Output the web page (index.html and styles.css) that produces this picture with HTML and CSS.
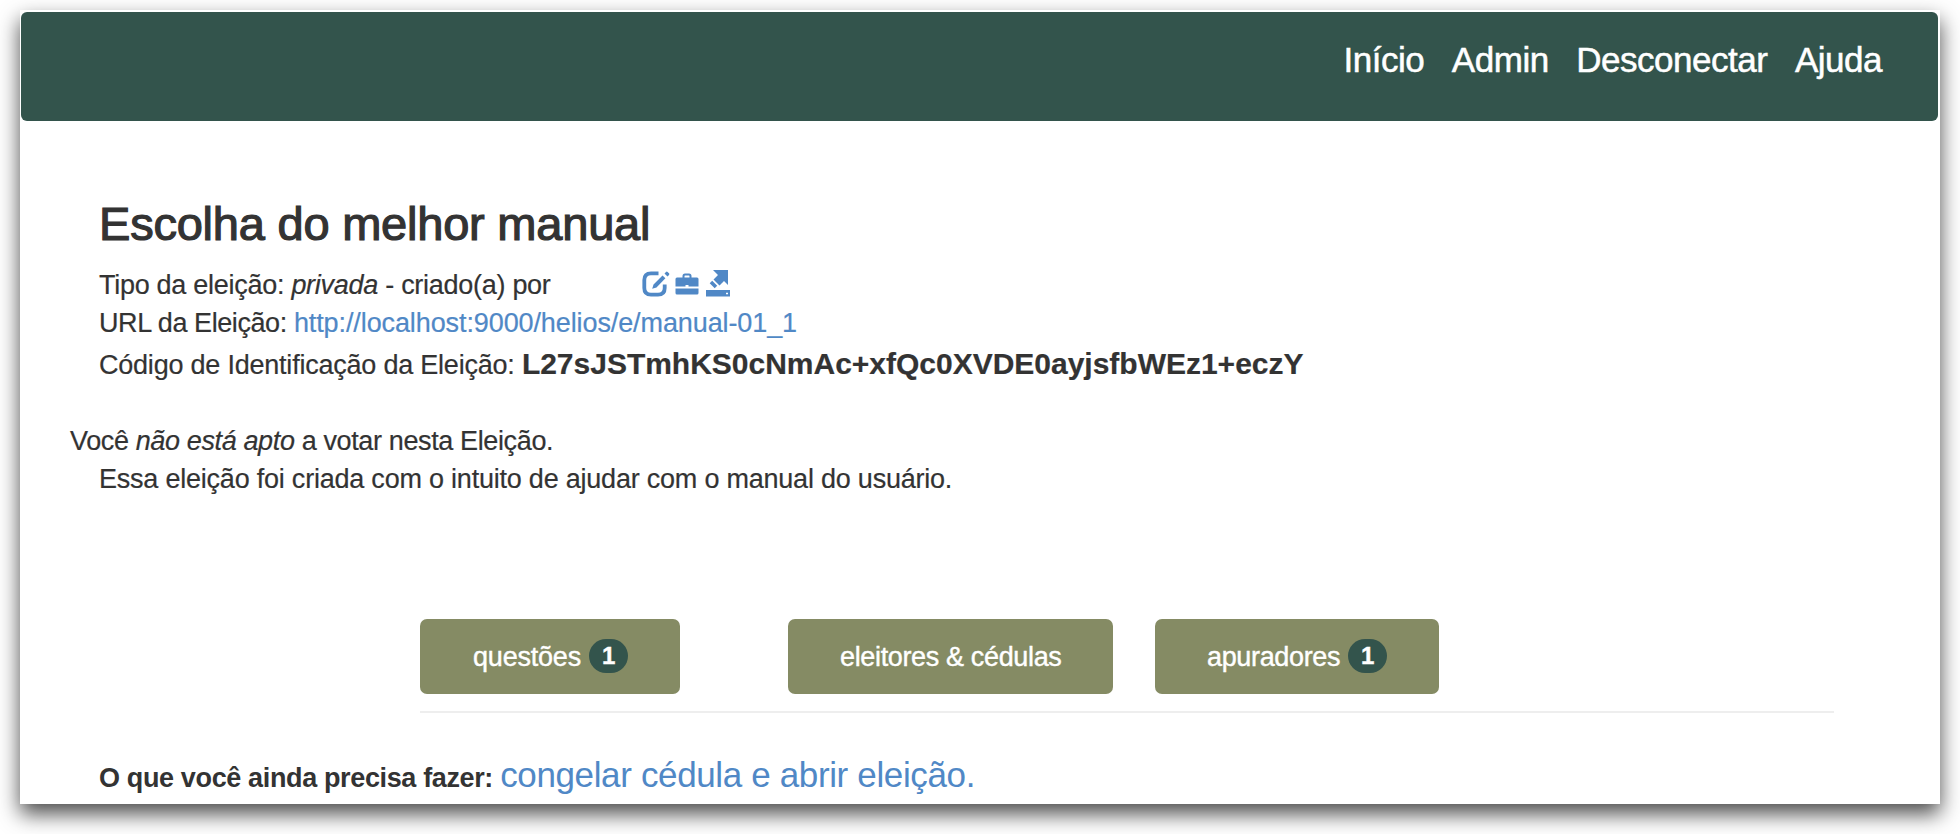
FILE: index.html
```html
<!DOCTYPE html>
<html lang="pt-BR">
<head>
<meta charset="utf-8">
<title>Escolha do melhor manual</title>
<link rel="stylesheet" href="styles.css">
</head>
<body>
<div class="window">
  <nav class="navbar">
    <a href="#">Início</a>
    <a href="#">Admin</a>
    <a href="#">Desconectar</a>
    <a href="#">Ajuda</a>
  </nav>
  <main class="content">
    <h2 class="title">Escolha do melhor manual</h2>
    <div class="line type-line">
      <span>Tipo da eleição: <em>privada</em> - criado(a) por</span>
      <span class="icons">
        <a href="#"><svg class="icon-edit" width="28" height="26" viewBox="0 0 28 26"><path d="M16.500 2.300H9Q2.300 2.300 2.300 9v8q0 6.700 6.700 6.700h7q6.700 0 6.700-6.700v-3.500" fill="none" stroke="currentColor" stroke-width="3.800"/><path d="M10.200 17.800l1.300-4.400L20.500 4.400l2.900 2.900L14.500 16.400zM22.500 2.400l1.500-1.500q.8-.8 1.600 0l1.400 1.400q.8.800 0 1.600l-1.500 1.500z" fill="currentColor"/></svg></a>
        <a href="#"><svg class="icon-case" width="24" height="22" viewBox="0 0 24 22"><path d="M8.500 5V3q0-1.500 1.500-1.500h4q1.500 0 1.500 1.500v2" fill="none" stroke="currentColor" stroke-width="2"/><path d="M2 4.500h20q1.500 0 1.500 1.500v7.500h-10v-1.500h-3v1.500H.5V6Q.5 4.500 2 4.500zM.5 15.500h23V20q0 1.500-1.500 1.500H2Q.5 21.500.5 20z" fill="currentColor"/></svg></a>
        <a href="#"><svg class="icon-save" width="26" height="27" viewBox="0 0 26 27"><path d="M8 0h15v15l-4-4-4.500 4.500-6-6L13 5zM7.200 10.800l5 5-2.500 2.500-5-5zM1 20h24v6.500H1z" fill="currentColor"/><path d="M21 22.700h2v1.500h-2z" fill="#fff"/></svg></a>
      </span>
    </div>
    <div class="line"><span class="url-label">URL da Eleição: </span><a href="#" class="url">http://localhost:9000/helios/e/manual-01_1</a></div>
    <div class="line code-line">Código de Identificação da Eleição: <strong class="code">L27sJSTmhKS0cNmAc+xfQc0XVDE0ayjsfbWEz1+eczY</strong></div>
    <div class="line notice">Você <em>não está apto</em> a votar nesta Eleição.</div>
    <div class="line">Essa eleição foi criada com o intuito de ajudar com o manual do usuário.</div>
    <div class="actions">
      <div class="cell cell-one"><a href="#" class="button button-one"><span class="label">questões</span><span class="badge">1</span></a></div>
      <div class="cell cell-two"><a href="#" class="button"><span class="label">eleitores &amp; cédulas</span></a></div>
      <div class="cell"><a href="#" class="button"><span class="label">apuradores</span><span class="badge">1</span></a></div>
    </div>
    <div class="todo"><strong>O que você ainda precisa fazer: </strong><a href="#">congelar cédula e abrir eleição.</a></div>
  </main>
</div>
</body>
</html>
```
FILE: styles.css
```css
* { box-sizing: border-box; }
body {
  margin: 0;
  height: 834px;
  overflow: hidden;
  display: flow-root;
  background: #fff;
  color: #333;
  font-family: "Liberation Sans", Arial, sans-serif;
  font-size: 27px;
  letter-spacing: -0.22px;
}
a { color: #5088c6; text-decoration: none; }
.window {
  width: 1920px;
  height: 794px;
  margin: 10px 20px 0;
  padding: 2px 2px 0 1px;
  background: #fff;
  box-shadow: 0 10px 20px rgba(0, 0, 0, .7);
}
.navbar {
  display: flex;
  justify-content: flex-end;
  gap: 27.5px;
  height: 109px;
  padding: 28px 56px 0 0;
  border-radius: 6px;
  background: #33544c;
}
.navbar a {
  color: #fff;
  font-size: 35px;
  line-height: 40px;
  letter-spacing: -0.48px;
  -webkit-text-stroke: .5px #fff;
}
.content { padding: 76px 104px 0 78px; }
.title {
  margin: 0 0 17px;
  font-size: 47px;
  font-weight: 400;
  line-height: 54px;
  height: 52px;
  letter-spacing: -0.22px;
  -webkit-text-stroke: 1.2px #333;
}
.line { height: 38px; line-height: 38px; white-space: pre; -webkit-text-stroke: .2px; }
.type-line { display: flex; letter-spacing: -0.28px; }
.icons { display: flex; align-items: flex-start; margin-left: 91px; }
.icons svg { display: block; }
.icon-edit { margin: 5px 5px 0 0; }
.icon-case { margin: 7px 6px 0 0; }
.icon-save { margin-top: 4px; }
.url-label { letter-spacing: -0.42px; }
.url { letter-spacing: -0.1px; }
.code-line { margin-top: 3px; }
.code { font-size: 30px; letter-spacing: -0.01px; }
.notice { margin: 39px 0 0 -29px; letter-spacing: -0.37px; }
.actions {
  display: flex;
  height: 94px;
  margin: 121px 0 0 321px;
  border-bottom: 2px solid #eee;
}
.cell-one { width: 368px; }
.cell-two { width: 367px; }
.button {
  display: inline-flex;
  align-items: center;
  height: 75px;
  padding: 0 52px;
  border-radius: 7px;
  background: #858b64;
  color: #fff;
  letter-spacing: -0.35px;
  -webkit-text-stroke: .4px #fff;
}
.button-one { padding: 0 52px 0 53px; letter-spacing: -0.2px; }
.label { padding-top: 2px; }
.badge {
  width: 39px;
  height: 34px;
  margin: -1px 0 0 8px;
  border-radius: 17px;
  background: #33544c;
  font-size: 24px;
  font-weight: 700;
  line-height: 34px;
  text-align: center;
}
.todo { margin-top: 37px; font-size: 35px; line-height: 50px; letter-spacing: -0.36px; white-space: pre; }
.todo strong { font-size: 27px; }
```
